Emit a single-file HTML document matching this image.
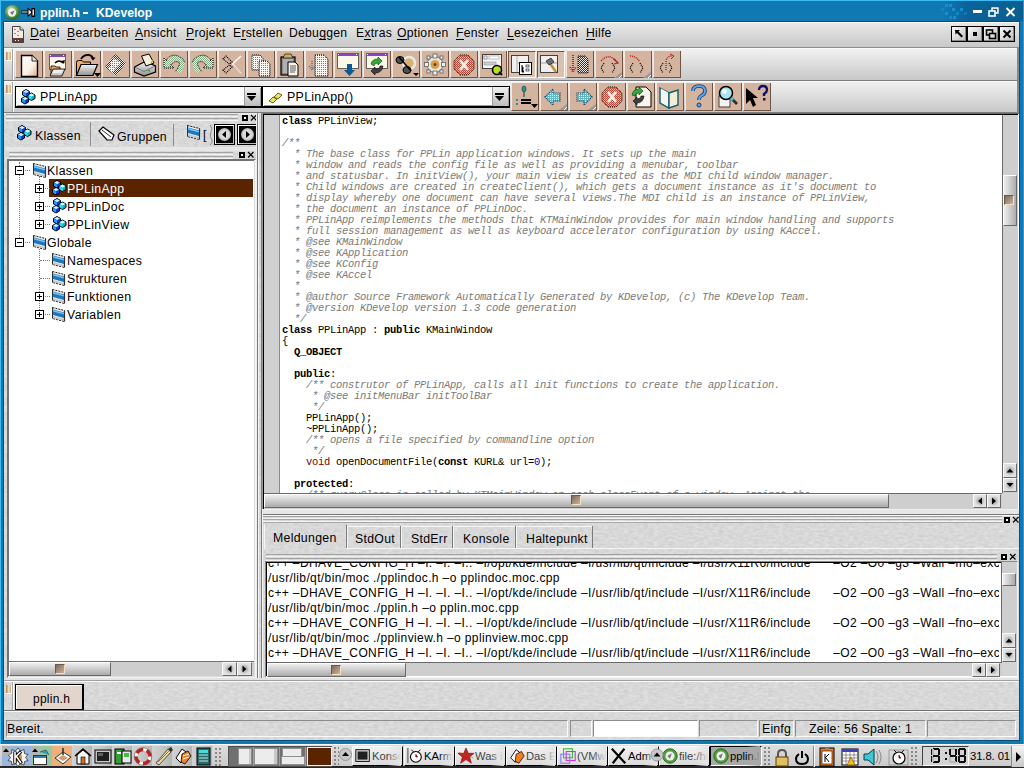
<!DOCTYPE html><html><head><meta charset="utf-8"><title>pplin.h - KDevelop</title><style>
*{margin:0;padding:0;box-sizing:border-box}
html,body{width:1024px;height:768px;overflow:hidden}
body{position:relative;background:#d8d8d8;font-family:"Liberation Sans",sans-serif;font-size:12px;color:#000}
div,span,svg{position:absolute}
u{text-decoration:none;border-bottom:1px solid #000;display:inline-block;line-height:11px}
.btn{width:28px;background:#d4b39f;border-left:1px solid #f6e6dc;border-right:1px solid #6e5444;border-bottom:1px solid #6e5444}
.btn.on{background:#dcc0ae;border:1px solid;border-color:#6e5444 #fff #fff #6e5444}
.hdl{width:5px;height:9px;background:linear-gradient(90deg,#a87c54,#f4dcb4 50%,#d4ac84);border-right:1px solid #fff;border-bottom:1px solid #fff}
.grv{height:3px;border-top:1px solid #a4a4a4;border-bottom:1px solid #f4f4f4}
.vgrv{width:2px;border-left:1px solid #a4a4a4;border-right:1px solid #fff}
.sunk{border:1px solid;border-color:#8c8c8c #fafafa #fafafa #8c8c8c}
.code{font-family:"Liberation Mono",monospace;font-size:10.5px;letter-spacing:-0.3px;line-height:11px;white-space:pre;color:#000}
.cm{color:#7a7a7a;font-style:italic;font-weight:normal}
.kw{font-weight:bold}
.out{font-size:12px;white-space:pre;line-height:15px;letter-spacing:0.38px}
.sbh{background:linear-gradient(#eeeeee,#ababab);border:1px solid;border-color:#fff #6a6a6a #6a6a6a #fff}
.sbv{background:linear-gradient(90deg,#eeeeee,#ababab);border:1px solid;border-color:#fff #6a6a6a #6a6a6a #fff}
.knob{width:10px;height:10px;background:linear-gradient(135deg,#7e6a58,#c8b49c);border:1px solid;border-color:#6c5848 #f2e2c0 #f2e2c0 #6c5848}
.trk{background:#cecece}
.t12{font-size:12.3px;white-space:pre;letter-spacing:0.2px}
</style></head><body>
<div style="left:0px;top:0px;width:1024px;height:744px;background:#1079b1"></div>
<div style="left:0px;top:0px;width:1024px;height:1px;background:#3cbcf4"></div>
<div style="left:0px;top:0px;width:1px;height:744px;background:#3cbcf4"></div>
<div style="left:1023px;top:0px;width:1px;height:744px;background:#2a9ad6"></div>
<div style="left:943px;top:1px;width:80px;height:20px;background:linear-gradient(90deg,#1079b1,#0b6399 30%,#0a5f90)"></div>
<div style="left:945px;top:4px;width:3px;height:3px;background:#1a8ed0"></div>
<div style="left:949px;top:4px;width:3px;height:3px;background:#1a8ed0"></div>
<div style="left:952px;top:8px;width:3px;height:3px;background:#1a8ed0"></div>
<div style="left:945px;top:12px;width:3px;height:3px;background:#1a8ed0"></div>
<div style="left:956px;top:12px;width:3px;height:3px;background:#1486c4"></div>
<div style="left:960px;top:8px;width:3px;height:3px;background:#1a8ed0"></div>
<div style="left:949px;top:16px;width:3px;height:3px;background:#1486c4"></div>
<div style="left:953px;top:16px;width:3px;height:3px;background:#1a8ed0"></div>
<div style="left:964px;top:12px;width:3px;height:3px;background:#1279b4"></div>
<div style="left:941px;top:8px;width:3px;height:3px;background:#1486c4"></div>
<div style="left:3px;top:21px;width:1017px;height:720px;background:#08507a"></div>
<div style="left:4px;top:22px;width:1015px;height:718px;background:#d8d8d8"></div>
<svg style="left:4px;top:22px" width="1015" height="718"><filter id="stn" x="0" y="0" width="100%" height="100%" color-interpolation-filters="sRGB"><feTurbulence type="fractalNoise" baseFrequency="0.2 0.45" numOctaves="2" seed="3"/><feColorMatrix type="matrix" values="0.12 0 0 0 0.787  0.12 0 0 0 0.787  0.12 0 0 0 0.787  0 0 0 0 1"/></filter><rect width="1015" height="718" fill="#000" filter="url(#stn)"/></svg>
<div style="left:1019px;top:22px;width:1px;height:718px;background:#08507a"></div>
<svg style="left:4px;top:4px" width="18" height="17" viewBox="0 0 18 17"><defs><radialGradient id="gi" cx="0.4" cy="0.35" r="0.6"><stop offset="0" stop-color="#e8f4e0"/><stop offset="0.5" stop-color="#78b060"/><stop offset="1" stop-color="#2a7020"/></radialGradient></defs><circle cx="8.5" cy="8.5" r="7.5" fill="url(#gi)"/><circle cx="8" cy="8.5" r="4.2" fill="#f0f0f0"/><path d="M10.5 6.5L6 8.5L8.5 11Z" fill="#707070"/></svg>
<svg style="left:20px;top:7px" width="16" height="11" viewBox="0 0 16 11"><path d="M1 3.5H8V6.5H1Z" fill="#000"/><path d="M1.5 5H8" stroke="#f4f0ec" stroke-width="1"/><path d="M7.5 0.5L12 4V6.5L7.5 10Z" fill="#000"/><path d="M8.5 2.5L11 4.5V6L8.5 8Z" fill="#f4f0ec"/><path d="M11.5 1H15V10H11.5Z" fill="#000"/><path d="M12.5 2.5H14V8.5H12.5Z" fill="#f4f0ec"/></svg>
<div style="left:83px;top:12px;width:5px;height:2px;background:#fff"></div>
<span style="left:40px;top:6px;color:#fff;font-weight:bold;font-size:12.2px;letter-spacing:0px">pplin.h</span>
<span style="left:96px;top:6px;color:#fff;font-weight:bold;font-size:12.2px;letter-spacing:0px">KDevelop</span>
<div style="left:973px;top:10px;width:9px;height:3px;background:#fff"></div>
<svg style="left:988px;top:6px" width="12" height="12" viewBox="0 0 12 12"><rect x="3.5" y="1.5" width="7" height="6" fill="none" stroke="#000" stroke-width="1"/><rect x="4" y="2" width="6" height="5" fill="none" stroke="#fff" stroke-width="1.6"/><rect x="1" y="5" width="6" height="5" fill="#0a5f90" stroke="#fff" stroke-width="1.6"/></svg>
<svg style="left:1005px;top:7px" width="11" height="10" viewBox="0 0 11 10"><path d="M1.5 1L9.5 9M9.5 1L1.5 9" stroke="#fff" stroke-width="1.8"/></svg>
<div style="left:4px;top:22px;width:1015px;height:1px;background:#fff"></div>
<div style="left:4px;top:23px;width:1015px;height:24px;background:linear-gradient(#e8e8e8,#c8c8c8)"></div>
<div style="left:4px;top:47px;width:1015px;height:1px;background:#8e8e8e"></div>
<svg style="left:11px;top:25px" width="14" height="19" viewBox="0 0 14 19"><path d="M1.5 1.5H9L12.5 5V17.5H1.5Z" fill="#f4ece4" stroke="#404040"/><path d="M2 13H12V17H2Z" fill="#6a3a34"/><path d="M9 1.5V5H12.5" fill="#ddd" stroke="#404040"/><g fill="#9a8a80"><rect x="3" y="4" width="2" height="1"/><rect x="6" y="6" width="2" height="1"/><rect x="3" y="8" width="2" height="1"/><rect x="6" y="10" width="2" height="1"/></g><rect x="4" y="15" width="1" height="1" fill="#fff"/><rect x="7" y="15" width="1" height="1" fill="#fff"/></svg>
<span class="t12" style="left:30px;top:26px;font-size:12.2px;letter-spacing:0.25px"><u>D</u>atei</span>
<span class="t12" style="left:67px;top:26px;font-size:12.2px;letter-spacing:0.25px"><u>B</u>earbeiten</span>
<span class="t12" style="left:135px;top:26px;font-size:12.2px;letter-spacing:0.25px"><u>A</u>nsicht</span>
<span class="t12" style="left:186px;top:26px;font-size:12.2px;letter-spacing:0.25px"><u>P</u>rojekt</span>
<span class="t12" style="left:233px;top:26px;font-size:12.2px;letter-spacing:0.25px">E<u>r</u>stellen</span>
<span class="t12" style="left:289px;top:26px;font-size:12.2px;letter-spacing:0.25px">Debu<u>g</u>gen</span>
<span class="t12" style="left:356px;top:26px;font-size:12.2px;letter-spacing:0.25px">E<u>x</u>tras</span>
<span class="t12" style="left:397px;top:26px;font-size:12.2px;letter-spacing:0.25px"><u>O</u>ptionen</span>
<span class="t12" style="left:456px;top:26px;font-size:12.2px;letter-spacing:0.25px"><u>F</u>enster</span>
<span class="t12" style="left:507px;top:26px;font-size:12.2px;letter-spacing:0.25px"><u>L</u>esezeichen</span>
<span class="t12" style="left:586px;top:26px;font-size:12.2px;letter-spacing:0.25px"><u>H</u>ilfe</span>
<div style="left:951px;top:26px;width:16px;height:16px;background:linear-gradient(135deg,#fafafa,#bdbdbd);border:1px solid #000;box-shadow:inset -1px -1px 0 #888"></div>
<svg style="left:952px;top:27px" width="14" height="14" viewBox="0 0 14 14"><path d="M3 3H8L6.5 4.5L11 9L9.5 10.5L5 6L3.5 7.5Z" fill="#000"/></svg>
<div style="left:967px;top:26px;width:16px;height:16px;background:linear-gradient(135deg,#fafafa,#bdbdbd);border:1px solid #000;box-shadow:inset -1px -1px 0 #888"></div>
<svg style="left:968px;top:27px" width="14" height="14" viewBox="0 0 14 14"><rect x="5" y="5" width="4" height="4" fill="#000"/></svg>
<div style="left:983px;top:26px;width:16px;height:16px;background:linear-gradient(135deg,#fafafa,#bdbdbd);border:1px solid #000;box-shadow:inset -1px -1px 0 #888"></div>
<svg style="left:984px;top:27px" width="14" height="14" viewBox="0 0 14 14"><rect x="2.5" y="3" width="6" height="5" fill="none" stroke="#000" stroke-width="1.6"/><rect x="5.5" y="6.5" width="6" height="5" fill="#ddd" stroke="#000" stroke-width="1.6"/></svg>
<div style="left:999px;top:26px;width:16px;height:16px;background:linear-gradient(135deg,#fafafa,#bdbdbd);border:1px solid #000;box-shadow:inset -1px -1px 0 #888"></div>
<svg style="left:1000px;top:27px" width="14" height="14" viewBox="0 0 14 14"><path d="M3.5 3.5L10.5 10.5M10.5 3.5L3.5 10.5" stroke="#000" stroke-width="2"/></svg>
<div style="left:4px;top:48px;width:1015px;height:32px;background:linear-gradient(#f2f2f2,#c8c8c8)"></div>
<div style="left:4px;top:48px;width:1015px;height:1px;background:#fafafa"></div>
<div style="left:4px;top:80px;width:1015px;height:1px;background:#7c7c7c"></div>
<div style="left:4px;top:81px;width:1015px;height:31px;background:linear-gradient(#f2f2f2,#c8c8c8)"></div>
<div style="left:4px;top:81px;width:1015px;height:1px;background:#fafafa"></div>
<div style="left:4px;top:112px;width:1015px;height:1px;background:#7c7c7c"></div>
<div style="left:1017px;top:48px;width:2px;height:65px;background:#888"></div>
<div class="hdl" style="left:6px;top:52px;width:6px;height:9px;"></div>
<div class="hdl" style="left:6px;top:85px;width:6px;height:9px;"></div>
<div class="vgrv" style="left:12px;top:49px;width:2px;height:31px;"></div>
<div class="vgrv" style="left:12px;top:82px;width:2px;height:30px;"></div>
<svg style="left:0;top:0" width="0" height="0"><defs><pattern id="dith" width="2" height="2" patternUnits="userSpaceOnUse"><rect width="2" height="2" fill="#f2ebe4"/><rect width="1" height="1" fill="#3a3028"/><rect x="1" y="1" width="1" height="1" fill="#3a3028"/></pattern><pattern id="dithl" width="2" height="2" patternUnits="userSpaceOnUse"><rect width="2" height="2" fill="#faf6f2"/><rect width="1" height="1" fill="#8a7a70"/></pattern><pattern id="dithg" width="2" height="2" patternUnits="userSpaceOnUse"><rect width="2" height="2" fill="#80b088"/><rect width="1" height="1" fill="#e0f0e0"/><rect x="1" y="1" width="1" height="1" fill="#e0f0e0"/></pattern><pattern id="dithr" width="2" height="2" patternUnits="userSpaceOnUse"><rect width="2" height="2" fill="#b84838"/><rect width="1" height="1" fill="#ecc4bc"/><rect x="1" y="1" width="1" height="1" fill="#d89080"/></pattern><pattern id="dithb" width="2" height="2" patternUnits="userSpaceOnUse"><rect width="2" height="2" fill="#60b8c8"/><rect width="1" height="1" fill="#e8f8fc"/></pattern><linearGradient id="gry" x1="0" y1="0" x2="0" y2="1"><stop offset="0" stop-color="#f4f4f4"/><stop offset="1" stop-color="#909090"/></linearGradient></defs></svg>
<div class="btn" style="left:15px;top:51px;width:28px;height:27px;"></div>
<svg style="left:15px;top:51px" width="28" height="27" viewBox="0 0 28 27"><defs><linearGradient id="pg" x1="0" y1="0" x2="1" y2="1"><stop offset="0" stop-color="#fff"/><stop offset="0.6" stop-color="#fbeee4"/><stop offset="1" stop-color="#e0a884"/></linearGradient></defs><path d="M6.5 4.5H17L22.5 10V25.5H6.5Z" fill="url(#pg)" stroke="#000" stroke-width="1.4"/><path d="M17 4.5V10H22.5" fill="#e8e8e8" stroke="#000" stroke-width="0.8"/></svg>
<div class="btn" style="left:44px;top:51px;width:28px;height:27px;"></div>
<svg style="left:44px;top:51px" width="28" height="27" viewBox="0 0 28 27"><rect x="5.5" y="3.5" width="16" height="15" fill="#fbf8e8" stroke="#606060"/><rect x="6" y="4" width="15" height="2" fill="#8a44c4"/><rect x="6" y="4" width="1" height="1" fill="#fff"/><rect x="19" y="4" width="1" height="1" fill="#fff"/><g transform="translate(6,13)"><path d="M1 2H5L6 3H10V11H1Z" fill="#f0a860" stroke="#000" stroke-width="0.8"/><path d="M3 5H15L12 12H0Z" fill="#c8c8c8" stroke="#000" stroke-width="0.8"/><path d="M4 6H13L11.5 9H2Z" fill="#eeeeee"/></g><path d="M11 12Q15 8 19 12" fill="none" stroke="#000" stroke-width="1.6"/><path d="M17 10L20 13L21 9Z" fill="#000"/></svg>
<div class="btn" style="left:73px;top:51px;width:28px;height:27px;"></div>
<svg style="left:73px;top:51px" width="28" height="27" viewBox="0 0 28 27"><path d="M3.5 11.5Q3.5 9.5 5.5 9.5H9L10.5 11H17.5V24.5H3.5Z" fill="#f2a860" stroke="#000" stroke-width="1"/><path d="M3.5 24.5L8 13.5H24.5L20 24.5Z" fill="url(#gry)" stroke="#000" stroke-width="1.2"/><path d="M8 8Q11 3.5 16 4Q19 4.5 20 7" fill="none" stroke="#000" stroke-width="1.8"/><path d="M17.5 6.5H22.5L20 9.5Z" fill="#000"/><path d="M21 22H28L24.5 26Z" fill="#000"/></svg>
<div class="btn" style="left:102px;top:51px;width:28px;height:27px;"></div>
<svg style="left:102px;top:51px" width="28" height="27" viewBox="0 0 28 27"><path d="M13 3L24 12L14 25L3 16Z" fill="url(#dith)"/><path d="M12 7L19 12L14 17L8 13Z" fill="url(#dithl)"/><path d="M6 17L10 14L14 18L10 21Z" fill="url(#dithl)"/></svg>
<div class="btn" style="left:131px;top:51px;width:28px;height:27px;"></div>
<svg style="left:131px;top:51px" width="28" height="27" viewBox="0 0 28 27"><path d="M3.5 16L14 10.5L24.5 15V21L13 25L3.5 21Z" fill="url(#gry)" stroke="#000" stroke-width="1.2"/><path d="M3.5 16L13 20.5L24.5 15" fill="none" stroke="#666" stroke-width="0.8"/><path d="M10.5 5L18 3L23 12L15 15Z" fill="#f6eee0" stroke="#000" stroke-width="1"/><path d="M20 12L22 9" stroke="#c0b000" stroke-width="1.2"/><rect x="17" y="19" width="2" height="1.5" fill="#20c020"/></svg>
<div class="btn" style="left:160px;top:51px;width:28px;height:27px;"></div>
<svg style="left:160px;top:51px" width="28" height="27" viewBox="0 0 28 27"><path d="M4 7L4 17L14 17Z" fill="url(#dithg)" stroke="#000" stroke-dasharray="1 1"/><path d="M8 13Q13 3 21 9Q25 12 18 21" fill="none" stroke="url(#dithg)" stroke-width="4.5"/><path d="M10 16Q14 8.5 19 11.5Q21 13 15 21" fill="none" stroke="#000" stroke-dasharray="1 1"/><path d="M6 9Q13 0 23 8L25 12" fill="none" stroke="#000" stroke-dasharray="1 1"/></svg>
<div class="btn" style="left:189px;top:51px;width:28px;height:27px;"></div>
<svg style="left:189px;top:51px" width="28" height="27" viewBox="0 0 28 27"><g transform="translate(28,0) scale(-1,1)"><path d="M4 7L4 17L14 17Z" fill="url(#dithg)" stroke="#000" stroke-dasharray="1 1"/><path d="M8 13Q13 3 21 9Q25 12 18 21" fill="none" stroke="url(#dithg)" stroke-width="4.5"/><path d="M10 16Q14 8.5 19 11.5Q21 13 15 21" fill="none" stroke="#000" stroke-dasharray="1 1"/><path d="M6 9Q13 0 23 8L25 12" fill="none" stroke="#000" stroke-dasharray="1 1"/></g></svg>
<div class="btn" style="left:218px;top:51px;width:28px;height:27px;"></div>
<svg style="left:218px;top:51px" width="28" height="27" viewBox="0 0 28 27"><path d="M14.5 13L23 5M14.5 13L23 22" stroke="#fff" stroke-width="1.4"/><path d="M15 14L23 21.5" stroke="#999" stroke-width="0.6"/><path d="M5 8L8 5L14 11L11.5 13Z" fill="none" stroke="#000" stroke-dasharray="1 1" stroke-width="1.2"/><path d="M5 19L8 22L14 16L11.5 14Z" fill="none" stroke="#000" stroke-dasharray="1 1" stroke-width="1.2"/></svg>
<div class="btn" style="left:247px;top:51px;width:28px;height:27px;"></div>
<svg style="left:247px;top:51px" width="28" height="27" viewBox="0 0 28 27"><path d="M5 4H13L16 7V19H5Z" fill="url(#dithl)" stroke="#000" stroke-width="1" stroke-dasharray="1 1"/><path d="M12 10H20L23 13V25H12Z" fill="url(#dithl)" stroke="#000" stroke-width="1" stroke-dasharray="1 1"/></svg>
<div class="btn" style="left:276px;top:51px;width:28px;height:27px;"></div>
<svg style="left:276px;top:51px" width="28" height="27" viewBox="0 0 28 27"><rect x="5" y="6" width="14" height="18" fill="#8a8a8a" stroke="#000" stroke-width="1.2"/><rect x="7" y="8" width="10" height="14" fill="#b0b0b0"/><path d="M9 3H15L17 7H7Z" fill="#c8b060" stroke="#000" stroke-width="0.6"/><path d="M12 11H19L22 14V25H12Z" fill="#fbf4ec" stroke="#000"/><g stroke="#333" stroke-width="0.8"><path d="M14 15H20M14 17H20M14 19H20M14 21H19"/></g></svg>
<div class="btn" style="left:305px;top:51px;width:28px;height:27px;"></div>
<svg style="left:305px;top:51px" width="28" height="27" viewBox="0 0 28 27"><path d="M10 4H19L23 8V25H10Z" fill="url(#dithl)" stroke="#000" stroke-width="1" stroke-dasharray="1 1"/><path d="M7 10V18M4 15L7 19L10 15" fill="none" stroke="#3a78b0" stroke-width="1.5" stroke-dasharray="1 1"/></svg>
<div class="btn" style="left:334px;top:51px;width:28px;height:27px;"></div>
<svg style="left:334px;top:51px" width="28" height="27" viewBox="0 0 28 27"><rect x="3.5" y="2.5" width="21" height="15" fill="#fbf8e8" stroke="#606060"/><rect x="4" y="3" width="20" height="2" fill="#8a44c4"/><rect x="4" y="3" width="1" height="1" fill="#fff"/><rect x="22" y="3" width="1" height="1" fill="#fff"/><path d="M13 13H18V19H21L15.5 25L10 19H13Z" fill="#0a5a96"/></svg>
<div class="btn" style="left:363px;top:51px;width:28px;height:27px;"></div>
<svg style="left:363px;top:51px" width="28" height="27" viewBox="0 0 28 27"><rect x="3.5" y="2.5" width="21" height="15" fill="#fbf8e8" stroke="#606060"/><rect x="4" y="3" width="20" height="2" fill="#8a44c4"/><rect x="4" y="3" width="1" height="1" fill="#fff"/><rect x="22" y="3" width="1" height="1" fill="#fff"/><path d="M8 13Q9 8 15 8L15 6L19 10L15 14L15 12Q11 12 11 15Z" fill="#38a838" stroke="#084008" stroke-width="0.6"/><path d="M20 15Q19 22 12 22L12 24L8 20L12 16L12 18Q17 18 17 15Z" fill="#404040" stroke="#000" stroke-width="0.6"/></svg>
<div class="btn" style="left:392px;top:51px;width:28px;height:27px;"></div>
<svg style="left:392px;top:51px" width="28" height="27" viewBox="0 0 28 27"><circle cx="17" cy="12" r="6" fill="#d8b070" stroke="#e8e8e8" stroke-width="2.5"/><ellipse cx="8" cy="9" rx="4" ry="3.5" fill="#505050" stroke="#000"/><ellipse cx="15" cy="19" rx="4" ry="3.5" fill="#505050" stroke="#000"/><path d="M7 6L19 20" stroke="#000" stroke-width="1.5"/><path d="M21 22H27L24 25Z" fill="#000"/></svg>
<div class="btn" style="left:421px;top:51px;width:28px;height:27px;"></div>
<svg style="left:421px;top:51px" width="28" height="27" viewBox="0 0 28 27"><circle cx="14" cy="13.5" r="8" fill="#e8e8e8" stroke="#707070" stroke-width="1"/><g fill="#f0f0f0" stroke="#606060" stroke-width="0.8"><rect x="12" y="3" width="4" height="4"/><rect x="12" y="20" width="4" height="4"/><rect x="3.5" y="11.5" width="4" height="4"/><rect x="20.5" y="11.5" width="4" height="4"/><rect x="6" y="5" width="3" height="3"/><rect x="19" y="5" width="3" height="3"/><rect x="6" y="19" width="3" height="3"/><rect x="19" y="19" width="3" height="3"/></g><circle cx="14" cy="13.5" r="4.5" fill="#d8a048"/><circle cx="14" cy="13.5" r="1.5" fill="#604020"/></svg>
<div class="btn" style="left:450px;top:51px;width:28px;height:27px;"></div>
<svg style="left:450px;top:51px" width="28" height="27" viewBox="0 0 28 27"><path d="M10 4H18L24 10V18L18 24H10L4 18V10Z" fill="url(#dithr)" stroke="#000" stroke-dasharray="1 1"/><path d="M10 9L18 19M18 9L10 19" stroke="#f8ece8" stroke-width="2.6"/></svg>
<div class="btn" style="left:479px;top:51px;width:28px;height:27px;"></div>
<svg style="left:479px;top:51px" width="28" height="27" viewBox="0 0 28 27"><rect x="3.5" y="3.5" width="19" height="14" fill="#f4f4f4" stroke="#404040"/><rect x="5" y="5" width="3" height="3" fill="#fff" stroke="#555" stroke-width="0.6"/><rect x="10" y="5" width="10" height="3" fill="#fff" stroke="#999" stroke-width="0.6"/><rect x="5" y="11" width="12" height="3" fill="#ccc" stroke="#999" stroke-width="0.6"/><circle cx="18" cy="19" r="4.5" fill="#b8e020" stroke="#000" stroke-width="1.6"/><path d="M20 21L23 24" stroke="#000" stroke-width="2"/></svg>
<div class="btn on" style="left:508px;top:51px;width:28px;height:27px;"></div>
<svg style="left:508px;top:51px" width="28" height="27" viewBox="0 0 28 27"><rect x="3.5" y="4.5" width="17" height="17" fill="#f0f0f0" stroke="#404040"/><path d="M9 5V21M9 12H20" stroke="#b0b0b0"/><rect x="11.5" y="11.5" width="12" height="12" fill="#fff" stroke="#000"/><path d="M14 14V21H16M14 17H16" stroke="#000"/><rect x="18" y="14" width="3" height="2" fill="none" stroke="#000" stroke-width="0.6"/><rect x="18" y="18" width="3" height="2" fill="none" stroke="#000" stroke-width="0.6"/></svg>
<div class="btn on" style="left:537px;top:51px;width:28px;height:27px;"></div>
<svg style="left:537px;top:51px" width="28" height="27" viewBox="0 0 28 27"><rect x="3.5" y="4.5" width="17" height="17" fill="#f0f0f0" stroke="#404040"/><path d="M4 12H20" stroke="#a0a0a0"/><path d="M12 11L19 21" stroke="#c09040" stroke-width="2.5"/><path d="M9 10L14 7L17 11L12 14Z" fill="#707070" stroke="#000" stroke-width="0.6"/></svg>
<div class="btn" style="left:566px;top:51px;width:28px;height:27px;"></div>
<svg style="left:566px;top:51px" width="28" height="27" viewBox="0 0 28 27"><path d="M7 4V20M4 16L7 21L10 16" fill="none" stroke="#b02020" stroke-width="1.8" stroke-dasharray="1 1"/><path d="M12 5H19L22 8V22H12Z" fill="url(#dith)" stroke="#000" stroke-width="1" stroke-dasharray="1 1"/></svg>
<div class="btn" style="left:595px;top:51px;width:28px;height:27px;"></div>
<svg style="left:595px;top:51px" width="28" height="27" viewBox="0 0 28 27"><path d="M6 10Q13 2 20 9L22 11" fill="none" stroke="#b02020" stroke-width="1.6" stroke-dasharray="1 1"/><path d="M19 8L23 12L19 13" fill="none" stroke="#b02020" stroke-width="1.2"/><path d="M9 12L6 17L9 22M17 12L20 17L17 22" fill="none" stroke="#000" stroke-width="1.2" stroke-dasharray="1 1"/><path d="M19 27L27 21V27Z" fill="#999"/><path d="M24 27L27 24" stroke="#fff"/></svg>
<div class="btn" style="left:624px;top:51px;width:28px;height:27px;"></div>
<svg style="left:624px;top:51px" width="28" height="27" viewBox="0 0 28 27"><path d="M6 5Q12 5 16 11" fill="none" stroke="#b02020" stroke-width="1.6" stroke-dasharray="1 1"/><path d="M9 12L6 17L9 22M16 12L19 17L16 22" fill="none" stroke="#000" stroke-width="1.2" stroke-dasharray="1 1"/><path d="M19 27L27 21V27Z" fill="#999"/><path d="M24 27L27 24" stroke="#fff"/></svg>
<div class="btn" style="left:653px;top:51px;width:28px;height:27px;"></div>
<svg style="left:653px;top:51px" width="28" height="27" viewBox="0 0 28 27"><path d="M13 19V10Q14 5 19 5" fill="none" stroke="#b02020" stroke-width="1.4" stroke-dasharray="1 1"/><path d="M17 3L21 5L18 8" fill="none" stroke="#b02020"/><path d="M10 12L7 17L10 22M16 12L19 17L16 22" fill="none" stroke="#000" stroke-width="1.2" stroke-dasharray="1 1"/></svg>
<div style="left:15px;top:86px;width:247px;height:22px;background:#fff;border:1px solid #000;border-bottom:2px solid #000;box-shadow:inset 1px 1px 0 #fff, inset -1px -1px 0 #9a9a9a"></div>
<div style="left:244px;top:87px;width:16px;height:19px;background:linear-gradient(#f0f0f0,#bcbcbc);border-left:1px solid #9a9a9a"></div>
<svg style="left:247px;top:93px" width="10" height="9" viewBox="0 0 10 9"><rect x="0" y="0" width="9" height="2" fill="#000"/><path d="M0 3H9L4.5 8Z" fill="#000"/></svg>
<svg style="left:20px;top:88px" width="17" height="18" viewBox="0 0 17 18"><path d="M6.0 1.5L9.5 3.5V7.0L6.0 9.0L2.5 7.0V3.5Z" fill="#0a3ae0" stroke="#000" stroke-width="1"/><path d="M6.0 2.1L8.9 3.6L6.0 5.3L3.1 3.6Z" fill="#c8f0ff"/><path d="M3.0 4.0L6.0 5.5V8.5L3.0 6.8Z" fill="#1aa0f8"/><path d="M11.5 5L15 7V10.5L11.5 12.5L8 10.5V7Z" fill="#10b0c0" stroke="#000" stroke-width="1"/><path d="M11.5 5.6L14.4 7.1L11.5 8.8L8.6 7.1Z" fill="#d0ffff"/><path d="M8.5 7.5L11.5 9V12L8.5 10.3Z" fill="#20e8f0"/><path d="M5.0 8.5L8.5 10.5V14.0L5.0 16.0L1.5 14.0V10.5Z" fill="#0a3ae0" stroke="#000" stroke-width="1"/><path d="M5.0 9.1L7.9 10.6L5.0 12.3L2.1 10.6Z" fill="#c8f0ff"/><path d="M2.0 11.0L5.0 12.5V15.5L2.0 13.8Z" fill="#1aa0f8"/></svg>
<span class="t12" style="left:40px;top:90px;font-size:12.4px;letter-spacing:0.3px">PPLinApp</span>
<div style="left:262px;top:86px;width:248px;height:22px;background:#fff;border:1px solid #000;border-bottom:2px solid #000;box-shadow:inset 1px 1px 0 #fff, inset -1px -1px 0 #9a9a9a"></div>
<div style="left:492px;top:87px;width:16px;height:19px;background:linear-gradient(#f0f0f0,#bcbcbc);border-left:1px solid #9a9a9a"></div>
<svg style="left:495px;top:93px" width="10" height="9" viewBox="0 0 10 9"><rect x="0" y="0" width="9" height="2" fill="#000"/><path d="M0 3H9L4.5 8Z" fill="#000"/></svg>
<svg style="left:267px;top:88px" width="17" height="18" viewBox="0 0 17 18"><g transform="translate(1,2)"><path d="M1 11L5 7L9 9L5 13Z" fill="#f0e060" stroke="#404000" stroke-width="0.8"/><path d="M6 7L10 3L14 5L10 9Z" fill="#f0e060" stroke="#404000" stroke-width="0.8"/></g></svg>
<span class="t12" style="left:287px;top:90px;font-size:12.4px;letter-spacing:0.3px">PPLinApp()</span>
<div class="btn" style="left:511px;top:83px;width:28px;height:28px;"></div>
<svg style="left:511px;top:83px" width="28" height="28" viewBox="0 0 28 28"><ellipse cx="13" cy="6" rx="2" ry="3" fill="#309090" stroke="#004040" stroke-width="0.6"/><path d="M13 9V12" stroke="#004040"/><rect x="12" y="12" width="2" height="2" fill="#309090"/><path d="M10 17H20M10 20H20" stroke="#000" stroke-width="2"/><rect x="5" y="16" width="2" height="2" fill="#309090"/><rect x="5" y="20" width="2" height="2" fill="#309090"/><path d="M20 21H27L23.5 25Z" fill="#000"/></svg>
<div class="btn" style="left:540px;top:83px;width:28px;height:28px;"></div>
<svg style="left:540px;top:83px" width="28" height="28" viewBox="0 0 28 28"><path d="M5 14L13 6V10H20V18H13V22Z" fill="url(#dithb)" stroke="#003050" stroke-width="1.2" stroke-dasharray="1 1"/><path d="M19 27L27 21V27Z" fill="#999"/><path d="M24 27L27 24" stroke="#fff"/></svg>
<div class="btn" style="left:569px;top:83px;width:28px;height:28px;"></div>
<svg style="left:569px;top:83px" width="28" height="28" viewBox="0 0 28 28"><path d="M23 14L15 6V10H8V18H15V22Z" fill="url(#dithb)" stroke="#003050" stroke-width="1.2" stroke-dasharray="1 1"/><path d="M19 27L27 21V27Z" fill="#999"/><path d="M24 27L27 24" stroke="#fff"/></svg>
<div class="btn" style="left:598px;top:83px;width:28px;height:28px;"></div>
<svg style="left:598px;top:83px" width="28" height="28" viewBox="0 0 28 28"><path d="M10 4H18L24 10V18L18 24H10L4 18V10Z" fill="url(#dithr)" stroke="#000" stroke-dasharray="1 1"/><path d="M10 9L18 19M18 9L10 19" stroke="#f8ece8" stroke-width="2.6"/></svg>
<div class="btn" style="left:627px;top:83px;width:28px;height:28px;"></div>
<svg style="left:627px;top:83px" width="28" height="28" viewBox="0 0 28 28"><path d="M9 4H19L24 9V24H9Z" fill="#fbf4ec" stroke="#000"/><path d="M5 12Q6 6 12 6L12 4L16 8L12 12L12 10Q8 10 8 13Z" fill="#38a838" stroke="#084008" stroke-width="0.6"/><path d="M17 13Q16 20 10 20L10 22L6 18L10 14L10 16Q14 16 14 13Z" fill="#404040" stroke="#000" stroke-width="0.6"/></svg>
<div class="btn" style="left:656px;top:83px;width:28px;height:28px;"></div>
<svg style="left:656px;top:83px" width="28" height="28" viewBox="0 0 28 28"><path d="M4 5L13 10V25L4 20Z" fill="#f8f4ec" stroke="#106070" stroke-width="1.4"/><path d="M13 10L22 7V22L13 25Z" fill="#f4ecd4" stroke="#106070" stroke-width="1.4"/><path d="M5 6L12 10" stroke="#fff"/></svg>
<div class="btn" style="left:685px;top:83px;width:28px;height:28px;"></div>
<svg style="left:685px;top:83px" width="28" height="28" viewBox="0 0 28 28"><path d="M8 8Q8 3 14 3Q20 3 20 8Q20 11 16 13Q14 14 14 17" fill="none" stroke="#1a3a70" stroke-width="3.6"/><path d="M8 8Q8 3 14 3Q20 3 20 8Q20 11 16 13Q14 14 14 17" fill="none" stroke="#5aa8e8" stroke-width="2"/><circle cx="14" cy="22" r="2" fill="#5aa8e8" stroke="#1a3a70"/></svg>
<div class="btn" style="left:714px;top:83px;width:28px;height:28px;"></div>
<svg style="left:714px;top:83px" width="28" height="28" viewBox="0 0 28 28"><rect x="5" y="13" width="11" height="11" fill="#f4f4f4" stroke="#404040"/><circle cx="12" cy="10" r="6.5" fill="#a8e4f0" stroke="#000" stroke-width="1.5"/><circle cx="10.5" cy="8.5" r="2.5" fill="#e8f8fc"/><path d="M17 15L23 21" stroke="#303030" stroke-width="2.8"/><path d="M17 15L19 17" stroke="#30d0e0" stroke-width="2.8"/></svg>
<div class="btn" style="left:743px;top:83px;width:28px;height:28px;"></div>
<svg style="left:743px;top:83px" width="28" height="28" viewBox="0 0 28 28"><path d="M3 5L3 21L7 17L10 24L13 22L10 15L15 15Z" fill="#000"/><path d="M16 7Q16 3 20 3Q24 3 24 7Q24 9 21 11L21 13" fill="none" stroke="#10106a" stroke-width="2.4"/><rect x="20" y="15" width="2.5" height="2.5" fill="#10106a"/></svg>
<div style="left:4px;top:113px;width:254px;height:2px;background:#e8e8e8"></div>
<div class="grv" style="left:6px;top:114px;width:232px;height:3px;"></div>
<div class="grv" style="left:6px;top:118px;width:232px;height:3px;"></div>
<div style="left:242px;top:115px;width:6px;height:6px;border:2px solid #000;background:#fff"></div>
<svg style="left:250px;top:114px" width="8" height="8" viewBox="0 0 8 8"><path d="M1 1L6.5 6.5M6.5 1L1 6.5" stroke="#000" stroke-width="1.2"/></svg>
<div style="left:90px;top:122px;width:1px;height:24px;background:#8c8c8c"></div>
<svg style="left:16px;top:124px" width="16" height="17" viewBox="0 0 16 17"><path d="M6.0 1.5L9.5 3.5V7.0L6.0 9.0L2.5 7.0V3.5Z" fill="#0a3ae0" stroke="#000" stroke-width="1"/><path d="M6.0 2.1L8.9 3.6L6.0 5.3L3.1 3.6Z" fill="#c8f0ff"/><path d="M3.0 4.0L6.0 5.5V8.5L3.0 6.8Z" fill="#1aa0f8"/><path d="M11.5 5L15 7V10.5L11.5 12.5L8 10.5V7Z" fill="#10b0c0" stroke="#000" stroke-width="1"/><path d="M11.5 5.6L14.4 7.1L11.5 8.8L8.6 7.1Z" fill="#d0ffff"/><path d="M8.5 7.5L11.5 9V12L8.5 10.3Z" fill="#20e8f0"/><path d="M5.0 8.5L8.5 10.5V14.0L5.0 16.0L1.5 14.0V10.5Z" fill="#0a3ae0" stroke="#000" stroke-width="1"/><path d="M5.0 9.1L7.9 10.6L5.0 12.3L2.1 10.6Z" fill="#c8f0ff"/><path d="M2.0 11.0L5.0 12.5V15.5L2.0 13.8Z" fill="#1aa0f8"/></svg>
<span class="t12" style="left:35px;top:129px;font-size:12.3px;letter-spacing:0.3px">Klassen</span>
<svg style="left:97px;top:125px" width="19" height="16" viewBox="0 0 19 16"><path d="M2 6L6 2L17 10L15 15H10Z" fill="#fff" stroke="#000" stroke-width="1.2"/><path d="M5 5L14 12" stroke="#000" stroke-width="0.8"/></svg>
<span class="t12" style="left:117px;top:130px;font-size:12.3px;letter-spacing:0.3px">Gruppen</span>
<div style="left:173px;top:124px;width:1px;height:22px;background:#8c8c8c"></div>
<svg style="left:186px;top:124px" width="16" height="17" viewBox="0 0 16 17"><path d="M1.5 1.5L13.5 4.5V15.5L1.5 12.5Z" fill="#e8e8e8" stroke="#202020" stroke-width="1" stroke-dasharray="2 1"/><path d="M2 3.5L13 6.5V12L2 9Z" fill="#1a78c0"/><path d="M2 4L13 7V8.5L2 5.5Z" fill="#7cc4f0"/><path d="M2 10L13 13V15L2 12Z" fill="#c8c8c8"/><path d="M13.5 4.5V15.5" stroke="#303030" stroke-width="1.2"/><path d="M1.5 1.5V12.5" stroke="#303030" stroke-width="1"/></svg>
<span class="t12" style="left:203px;top:128px;font-size:12px">[</span>
<svg style="left:208px;top:124px" width="6" height="22" viewBox="0 0 6 22"><path d="M2 1Q5 4 3 8Q1 12 4 16Q5 19 2 21" fill="none" stroke="#8a8a8a"/></svg>
<div style="left:214px;top:124px;width:21px;height:21px;background:#000;border:1px solid #000;box-shadow:inset 1px 1px 0 #fff, inset -1px -1px 0 #bbb"></div>
<div style="left:218px;top:128px;width:13px;height:13px;background:radial-gradient(circle,#dcdcdc 45%,#a4a4a4 75%);border-radius:7px"></div>
<svg style="left:221px;top:127px" width="8" height="15" viewBox="0 0 8 15"><path d="M5 4L1 7.5L5 11Z" fill="#000"/></svg>
<div style="left:237px;top:124px;width:21px;height:21px;background:#000;border:1px solid #000;box-shadow:inset 1px 1px 0 #fff, inset -1px -1px 0 #bbb"></div>
<div style="left:241px;top:128px;width:13px;height:13px;background:radial-gradient(circle,#dcdcdc 45%,#a4a4a4 75%);border-radius:7px"></div>
<svg style="left:244px;top:127px" width="8" height="15" viewBox="0 0 8 15"><path d="M2 4L6 7.5L2 11Z" fill="#000"/></svg>
<div style="left:6px;top:147px;width:250px;height:4px;background:#e6e6e6"></div>
<div class="grv" style="left:9px;top:152px;width:224px;height:3px;"></div>
<div class="grv" style="left:9px;top:156px;width:224px;height:3px;"></div>
<div style="left:239px;top:152px;width:6px;height:6px;border:2px solid #000;background:#fff"></div>
<svg style="left:247px;top:151px" width="8" height="8" viewBox="0 0 8 8"><path d="M1 1L6.5 6.5M6.5 1L1 6.5" stroke="#000" stroke-width="1.2"/></svg>
<div style="left:7px;top:159px;width:249px;height:519px;background:#fff;border:2px solid;border-color:#727272 #f4f4f4 #f4f4f4 #727272"></div>
<div style="left:254px;top:160px;width:1px;height:516px;background:#dcdcdc"></div>
<div style="left:8px;top:676px;width:247px;height:1px;background:#dcdcdc"></div>
<div style="left:49px;top:179px;width:204px;height:18px;background:#5b2400"></div>
<div style="left:19px;top:162px;width:1px;height:76px;border-left:1px dotted #7a7a7a"></div>
<div style="left:39px;top:176px;width:1px;height:44px;border-left:1px dotted #7a7a7a"></div>
<div style="left:39px;top:247px;width:1px;height:67px;border-left:1px dotted #7a7a7a"></div>
<div style="left:15px;top:166px;width:9px;height:9px;background:#fff;border:1px solid #000"></div>
<div style="left:17px;top:170px;width:5px;height:1px;background:#000"></div>
<div style="left:25px;top:170px;width:5px;height:1px;border-top:1px dotted #7a7a7a"></div>
<svg style="left:32px;top:162px" width="16" height="17" viewBox="0 0 16 17"><path d="M1.5 1.5L13.5 4.5V15.5L1.5 12.5Z" fill="#e8e8e8" stroke="#202020" stroke-width="1" stroke-dasharray="2 1"/><path d="M2 3.5L13 6.5V12L2 9Z" fill="#1a78c0"/><path d="M2 4L13 7V8.5L2 5.5Z" fill="#7cc4f0"/><path d="M2 10L13 13V15L2 12Z" fill="#c8c8c8"/><path d="M13.5 4.5V15.5" stroke="#303030" stroke-width="1.2"/><path d="M1.5 1.5V12.5" stroke="#303030" stroke-width="1"/></svg>
<span class="t12" style="left:47px;top:164px;font-size:12.3px;letter-spacing:0.35px;color:#000">Klassen</span>
<div style="left:35px;top:184px;width:9px;height:9px;background:#fff;border:1px solid #000"></div>
<div style="left:37px;top:188px;width:5px;height:1px;background:#000"></div>
<div style="left:39px;top:186px;width:1px;height:5px;background:#000"></div>
<div style="left:45px;top:188px;width:5px;height:1px;border-top:1px dotted #7a7a7a"></div>
<svg style="left:51px;top:179px" width="17" height="17" viewBox="0 0 17 17"><path d="M6.0 1.5L9.5 3.5V7.0L6.0 9.0L2.5 7.0V3.5Z" fill="#0a3ae0" stroke="#000" stroke-width="1"/><path d="M6.0 2.1L8.9 3.6L6.0 5.3L3.1 3.6Z" fill="#c8f0ff"/><path d="M3.0 4.0L6.0 5.5V8.5L3.0 6.8Z" fill="#1aa0f8"/><path d="M11.5 5L15 7V10.5L11.5 12.5L8 10.5V7Z" fill="#10b0c0" stroke="#000" stroke-width="1"/><path d="M11.5 5.6L14.4 7.1L11.5 8.8L8.6 7.1Z" fill="#d0ffff"/><path d="M8.5 7.5L11.5 9V12L8.5 10.3Z" fill="#20e8f0"/><path d="M5.0 8.5L8.5 10.5V14.0L5.0 16.0L1.5 14.0V10.5Z" fill="#0a3ae0" stroke="#000" stroke-width="1"/><path d="M5.0 9.1L7.9 10.6L5.0 12.3L2.1 10.6Z" fill="#c8f0ff"/><path d="M2.0 11.0L5.0 12.5V15.5L2.0 13.8Z" fill="#1aa0f8"/></svg>
<span class="t12" style="left:67px;top:182px;font-size:12.3px;letter-spacing:0.35px;color:#fff">PPLinApp</span>
<div style="left:35px;top:202px;width:9px;height:9px;background:#fff;border:1px solid #000"></div>
<div style="left:37px;top:206px;width:5px;height:1px;background:#000"></div>
<div style="left:39px;top:204px;width:1px;height:5px;background:#000"></div>
<div style="left:45px;top:206px;width:5px;height:1px;border-top:1px dotted #7a7a7a"></div>
<svg style="left:51px;top:197px" width="17" height="17" viewBox="0 0 17 17"><path d="M6.0 1.5L9.5 3.5V7.0L6.0 9.0L2.5 7.0V3.5Z" fill="#0a3ae0" stroke="#000" stroke-width="1"/><path d="M6.0 2.1L8.9 3.6L6.0 5.3L3.1 3.6Z" fill="#c8f0ff"/><path d="M3.0 4.0L6.0 5.5V8.5L3.0 6.8Z" fill="#1aa0f8"/><path d="M11.5 5L15 7V10.5L11.5 12.5L8 10.5V7Z" fill="#10b0c0" stroke="#000" stroke-width="1"/><path d="M11.5 5.6L14.4 7.1L11.5 8.8L8.6 7.1Z" fill="#d0ffff"/><path d="M8.5 7.5L11.5 9V12L8.5 10.3Z" fill="#20e8f0"/><path d="M5.0 8.5L8.5 10.5V14.0L5.0 16.0L1.5 14.0V10.5Z" fill="#0a3ae0" stroke="#000" stroke-width="1"/><path d="M5.0 9.1L7.9 10.6L5.0 12.3L2.1 10.6Z" fill="#c8f0ff"/><path d="M2.0 11.0L5.0 12.5V15.5L2.0 13.8Z" fill="#1aa0f8"/></svg>
<span class="t12" style="left:67px;top:200px;font-size:12.3px;letter-spacing:0.35px;color:#000">PPLinDoc</span>
<div style="left:35px;top:220px;width:9px;height:9px;background:#fff;border:1px solid #000"></div>
<div style="left:37px;top:224px;width:5px;height:1px;background:#000"></div>
<div style="left:39px;top:222px;width:1px;height:5px;background:#000"></div>
<div style="left:45px;top:224px;width:5px;height:1px;border-top:1px dotted #7a7a7a"></div>
<svg style="left:51px;top:215px" width="17" height="17" viewBox="0 0 17 17"><path d="M6.0 1.5L9.5 3.5V7.0L6.0 9.0L2.5 7.0V3.5Z" fill="#0a3ae0" stroke="#000" stroke-width="1"/><path d="M6.0 2.1L8.9 3.6L6.0 5.3L3.1 3.6Z" fill="#c8f0ff"/><path d="M3.0 4.0L6.0 5.5V8.5L3.0 6.8Z" fill="#1aa0f8"/><path d="M11.5 5L15 7V10.5L11.5 12.5L8 10.5V7Z" fill="#10b0c0" stroke="#000" stroke-width="1"/><path d="M11.5 5.6L14.4 7.1L11.5 8.8L8.6 7.1Z" fill="#d0ffff"/><path d="M8.5 7.5L11.5 9V12L8.5 10.3Z" fill="#20e8f0"/><path d="M5.0 8.5L8.5 10.5V14.0L5.0 16.0L1.5 14.0V10.5Z" fill="#0a3ae0" stroke="#000" stroke-width="1"/><path d="M5.0 9.1L7.9 10.6L5.0 12.3L2.1 10.6Z" fill="#c8f0ff"/><path d="M2.0 11.0L5.0 12.5V15.5L2.0 13.8Z" fill="#1aa0f8"/></svg>
<span class="t12" style="left:67px;top:218px;font-size:12.3px;letter-spacing:0.35px;color:#000">PPLinView</span>
<div style="left:15px;top:238px;width:9px;height:9px;background:#fff;border:1px solid #000"></div>
<div style="left:17px;top:242px;width:5px;height:1px;background:#000"></div>
<div style="left:25px;top:242px;width:5px;height:1px;border-top:1px dotted #7a7a7a"></div>
<svg style="left:32px;top:234px" width="16" height="17" viewBox="0 0 16 17"><path d="M1.5 1.5L13.5 4.5V15.5L1.5 12.5Z" fill="#e8e8e8" stroke="#202020" stroke-width="1" stroke-dasharray="2 1"/><path d="M2 3.5L13 6.5V12L2 9Z" fill="#1a78c0"/><path d="M2 4L13 7V8.5L2 5.5Z" fill="#7cc4f0"/><path d="M2 10L13 13V15L2 12Z" fill="#c8c8c8"/><path d="M13.5 4.5V15.5" stroke="#303030" stroke-width="1.2"/><path d="M1.5 1.5V12.5" stroke="#303030" stroke-width="1"/></svg>
<span class="t12" style="left:47px;top:236px;font-size:12.3px;letter-spacing:0.35px;color:#000">Globale</span>
<div style="left:40px;top:260px;width:10px;height:1px;border-top:1px dotted #7a7a7a"></div>
<svg style="left:51px;top:252px" width="16" height="17" viewBox="0 0 16 17"><path d="M1.5 1.5L13.5 4.5V15.5L1.5 12.5Z" fill="#e8e8e8" stroke="#202020" stroke-width="1" stroke-dasharray="2 1"/><path d="M2 3.5L13 6.5V12L2 9Z" fill="#1a78c0"/><path d="M2 4L13 7V8.5L2 5.5Z" fill="#7cc4f0"/><path d="M2 10L13 13V15L2 12Z" fill="#c8c8c8"/><path d="M13.5 4.5V15.5" stroke="#303030" stroke-width="1.2"/><path d="M1.5 1.5V12.5" stroke="#303030" stroke-width="1"/></svg>
<span class="t12" style="left:67px;top:254px;font-size:12.3px;letter-spacing:0.35px;color:#000">Namespaces</span>
<div style="left:40px;top:278px;width:10px;height:1px;border-top:1px dotted #7a7a7a"></div>
<svg style="left:51px;top:270px" width="16" height="17" viewBox="0 0 16 17"><path d="M1.5 1.5L13.5 4.5V15.5L1.5 12.5Z" fill="#e8e8e8" stroke="#202020" stroke-width="1" stroke-dasharray="2 1"/><path d="M2 3.5L13 6.5V12L2 9Z" fill="#1a78c0"/><path d="M2 4L13 7V8.5L2 5.5Z" fill="#7cc4f0"/><path d="M2 10L13 13V15L2 12Z" fill="#c8c8c8"/><path d="M13.5 4.5V15.5" stroke="#303030" stroke-width="1.2"/><path d="M1.5 1.5V12.5" stroke="#303030" stroke-width="1"/></svg>
<span class="t12" style="left:67px;top:272px;font-size:12.3px;letter-spacing:0.35px;color:#000">Strukturen</span>
<div style="left:35px;top:292px;width:9px;height:9px;background:#fff;border:1px solid #000"></div>
<div style="left:37px;top:296px;width:5px;height:1px;background:#000"></div>
<div style="left:39px;top:294px;width:1px;height:5px;background:#000"></div>
<div style="left:45px;top:296px;width:5px;height:1px;border-top:1px dotted #7a7a7a"></div>
<svg style="left:51px;top:288px" width="16" height="17" viewBox="0 0 16 17"><path d="M1.5 1.5L13.5 4.5V15.5L1.5 12.5Z" fill="#e8e8e8" stroke="#202020" stroke-width="1" stroke-dasharray="2 1"/><path d="M2 3.5L13 6.5V12L2 9Z" fill="#1a78c0"/><path d="M2 4L13 7V8.5L2 5.5Z" fill="#7cc4f0"/><path d="M2 10L13 13V15L2 12Z" fill="#c8c8c8"/><path d="M13.5 4.5V15.5" stroke="#303030" stroke-width="1.2"/><path d="M1.5 1.5V12.5" stroke="#303030" stroke-width="1"/></svg>
<span class="t12" style="left:67px;top:290px;font-size:12.3px;letter-spacing:0.35px;color:#000">Funktionen</span>
<div style="left:35px;top:310px;width:9px;height:9px;background:#fff;border:1px solid #000"></div>
<div style="left:37px;top:314px;width:5px;height:1px;background:#000"></div>
<div style="left:39px;top:312px;width:1px;height:5px;background:#000"></div>
<div style="left:45px;top:314px;width:5px;height:1px;border-top:1px dotted #7a7a7a"></div>
<svg style="left:51px;top:306px" width="16" height="17" viewBox="0 0 16 17"><path d="M1.5 1.5L13.5 4.5V15.5L1.5 12.5Z" fill="#e8e8e8" stroke="#202020" stroke-width="1" stroke-dasharray="2 1"/><path d="M2 3.5L13 6.5V12L2 9Z" fill="#1a78c0"/><path d="M2 4L13 7V8.5L2 5.5Z" fill="#7cc4f0"/><path d="M2 10L13 13V15L2 12Z" fill="#c8c8c8"/><path d="M13.5 4.5V15.5" stroke="#303030" stroke-width="1.2"/><path d="M1.5 1.5V12.5" stroke="#303030" stroke-width="1"/></svg>
<span class="t12" style="left:67px;top:308px;font-size:12.3px;letter-spacing:0.35px;color:#000">Variablen</span>
<div style="left:9px;top:661px;width:245px;height:1px;background:#727272"></div>
<div class="trk" style="left:9px;top:662px;width:245px;height:14px;"></div>
<div class="sbh" style="left:9px;top:662px;width:102px;height:14px;"></div>
<div class="knob" style="left:55px;top:664px;width:10px;height:10px;"></div>
<div style="left:222px;top:662px;width:15px;height:14px;background:radial-gradient(circle at 50% 50%,#c8c8c8 0,#bdbdbd 35%,#dedede 55%,#e6e6e6 100%);border:1px solid;border-color:#fafafa #6a6a6a #6a6a6a #fafafa"></div>
<svg style="left:0;top:0" width="1024" height="768"><path d="M231.5 665.5V672.5L227.5 669.0Z" fill="#000"/></svg>
<div style="left:237px;top:662px;width:15px;height:14px;background:radial-gradient(circle at 50% 50%,#c8c8c8 0,#bdbdbd 35%,#dedede 55%,#e6e6e6 100%);border:1px solid;border-color:#fafafa #6a6a6a #6a6a6a #fafafa"></div>
<svg style="left:0;top:0" width="1024" height="768"><path d="M242.5 665.5V672.5L246.5 669.0Z" fill="#000"/></svg>
<div style="left:256px;top:113px;width:1px;height:568px;background:#f0f0f0"></div>
<div style="left:257px;top:113px;width:1px;height:568px;background:#7a7a7a"></div>
<div style="left:258px;top:113px;width:1px;height:568px;background:#f4f4f4"></div>
<div style="left:261px;top:113px;width:1px;height:568px;background:#7a7a7a"></div>
<div style="left:262px;top:113px;width:757px;height:397px;background:#fff"></div>
<div style="left:262px;top:113px;width:757px;height:1px;background:#6a6a6a"></div>
<div style="left:262px;top:113px;width:1px;height:397px;background:#9a9a9a"></div>
<div style="left:263px;top:114px;width:755px;height:1px;background:#000"></div>
<div style="left:263px;top:114px;width:1px;height:395px;background:#000"></div>
<div style="left:262px;top:509px;width:757px;height:1px;background:#f0f0f0"></div>
<div style="left:264px;top:115px;width:15px;height:378px;background:#d0d0d0"></div>
<div style="left:279px;top:115px;width:1px;height:378px;background:#8a8a8a"></div>
<div class="trk" style="left:1002px;top:115px;width:16px;height:378px;"></div>
<div class="sbv" style="left:1003px;top:175px;width:14px;height:51px;"></div>
<div class="knob" style="left:1004px;top:195px;width:10px;height:10px;"></div>
<div style="left:1002px;top:115px;width:1px;height:378px;background:#6a6a6a"></div>
<div style="left:1003px;top:463px;width:14px;height:15px;background:radial-gradient(circle at 50% 50%,#c8c8c8 0,#bdbdbd 35%,#dedede 55%,#e6e6e6 100%);border:1px solid;border-color:#fafafa #6a6a6a #6a6a6a #fafafa"></div>
<svg style="left:0;top:0" width="1024" height="768"><path d="M1006.5 472.5H1013.5L1010.0 468.5Z" fill="#000"/></svg>
<div style="left:1003px;top:478px;width:14px;height:14px;background:radial-gradient(circle at 50% 50%,#c8c8c8 0,#bdbdbd 35%,#dedede 55%,#e6e6e6 100%);border:1px solid;border-color:#fafafa #6a6a6a #6a6a6a #fafafa"></div>
<svg style="left:0;top:0" width="1024" height="768"><path d="M1006.5 483.0H1013.5L1010.0 487.0Z" fill="#000"/></svg>
<div class="trk" style="left:264px;top:493px;width:738px;height:16px;"></div>
<div style="left:264px;top:493px;width:738px;height:1px;background:#6a6a6a"></div>
<div class="sbh" style="left:264px;top:494px;width:625px;height:14px;"></div>
<div class="knob" style="left:571px;top:495px;width:10px;height:10px;"></div>
<div style="left:973px;top:494px;width:14px;height:14px;background:radial-gradient(circle at 50% 50%,#c8c8c8 0,#bdbdbd 35%,#dedede 55%,#e6e6e6 100%);border:1px solid;border-color:#fafafa #6a6a6a #6a6a6a #fafafa"></div>
<svg style="left:0;top:0" width="1024" height="768"><path d="M982.0 497.5V504.5L978.0 501.0Z" fill="#000"/></svg>
<div style="left:987px;top:494px;width:14px;height:14px;background:radial-gradient(circle at 50% 50%,#c8c8c8 0,#bdbdbd 35%,#dedede 55%,#e6e6e6 100%);border:1px solid;border-color:#fafafa #6a6a6a #6a6a6a #fafafa"></div>
<svg style="left:0;top:0" width="1024" height="768"><path d="M992.0 497.5V504.5L996.0 501.0Z" fill="#000"/></svg>
<div style="left:1002px;top:493px;width:16px;height:16px;background:#d4d4d4"></div>
<div style="left:280px;top:115px;width:722px;height:378px;overflow:hidden"><div class="code" style="left:2px;top:1px"><b class="kw">class</b> PPLinView;

<i class="cm">/**</i>
<i class="cm">  * The base class for PPLin application windows. It sets up the main</i>
<i class="cm">  * window and reads the config file as well as providing a menubar, toolbar</i>
<i class="cm">  * and statusbar. In initView(), your main view is created as the MDI child window manager.</i>
<i class="cm">  * Child windows are created in createClient(), which gets a document instance as it's document to</i>
<i class="cm">  * display whereby one document can have several views.The MDI child is an instance of PPLinView,</i>
<i class="cm">  * the document an instance of PPLinDoc.</i>
<i class="cm">  * PPLinApp reimplements the methods that KTMainWindow provides for main window handling and supports</i>
<i class="cm">  * full session management as well as keyboard accelerator configuration by using KAccel.</i>
<i class="cm">  * @see KMainWindow</i>
<i class="cm">  * @see KApplication</i>
<i class="cm">  * @see KConfig</i>
<i class="cm">  * @see KAccel</i>
<i class="cm">  *</i>
<i class="cm">  * @author Source Framework Automatically Generated by KDevelop, (c) The KDevelop Team.</i>
<i class="cm">  * @version KDevelop version 1.3 code generation</i>
<i class="cm">  */</i>
<b class="kw">class</b> PPLinApp : <b class="kw">public</b> KMainWindow
{
  <b class="kw">Q_OBJECT</b>

  <b class="kw">public</b>:
    <i class="cm">/** construtor of PPLinApp, calls all init functions to create the application.</i>
     <i class="cm">* @see initMenuBar initToolBar</i>
     <i class="cm">*/</i>
    PPLinApp();
    ~PPLinApp();
    <i class="cm">/** opens a file specified by commandline option</i>
     <i class="cm">*/</i>
    <span style="position:static;color:#7a0000">void</span> openDocumentFile(<b class="kw">const</b> KURL&amp; url=<span style="position:static;color:#0000c8">0</span>);

  <b class="kw">protected</b>:
    <i class="cm">/** queryClose is called by KTMainWindow on each closeEvent of a window. Against the</i></div></div>
<div style="left:262px;top:510px;width:757px;height:4px;background:#e6e6e6"></div>
<div style="left:262px;top:514px;width:757px;height:1px;background:#787878"></div>
<div style="left:262px;top:515px;width:757px;height:1px;background:#f4f4f4"></div>
<div class="grv" style="left:263px;top:516px;width:739px;height:3px;"></div>
<div class="grv" style="left:263px;top:519px;width:739px;height:3px;"></div>
<div style="left:263px;top:522px;width:739px;height:1px;background:#a8a8a8"></div>
<div style="left:1004px;top:517px;width:6px;height:6px;border:2px solid #000;background:#fff"></div>
<svg style="left:1012px;top:516px" width="8" height="8" viewBox="0 0 8 8"><path d="M1 1L6.5 6.5M6.5 1L1 6.5" stroke="#000" stroke-width="1.2"/></svg>
<div style="left:262px;top:514px;width:1px;height:166px;background:#f4f4f4"></div>
<div style="left:346px;top:525px;width:1px;height:23px;background:#7a7a7a"></div>
<span class="t12" style="left:273px;top:531px;font-size:12.3px;letter-spacing:0.3px">Meldungen</span>
<div style="left:347px;top:526px;width:53px;height:1px;background:#f6f6f6"></div>
<div style="left:347px;top:526px;width:1px;height:22px;background:#f6f6f6"></div>
<div style="left:400px;top:526px;width:1px;height:22px;background:#7a7a7a"></div>
<span class="t12" style="left:355px;top:532px;font-size:12.3px;letter-spacing:0.3px">StdOut</span>
<div style="left:401px;top:526px;width:51px;height:1px;background:#f6f6f6"></div>
<div style="left:401px;top:526px;width:1px;height:22px;background:#f6f6f6"></div>
<div style="left:452px;top:526px;width:1px;height:22px;background:#7a7a7a"></div>
<span class="t12" style="left:411px;top:532px;font-size:12.3px;letter-spacing:0.3px">StdErr</span>
<div style="left:453px;top:526px;width:62px;height:1px;background:#f6f6f6"></div>
<div style="left:453px;top:526px;width:1px;height:22px;background:#f6f6f6"></div>
<div style="left:515px;top:526px;width:1px;height:22px;background:#7a7a7a"></div>
<span class="t12" style="left:463px;top:532px;font-size:12.3px;letter-spacing:0.3px">Konsole</span>
<div style="left:516px;top:526px;width:76px;height:1px;background:#f6f6f6"></div>
<div style="left:516px;top:526px;width:1px;height:22px;background:#f6f6f6"></div>
<div style="left:592px;top:526px;width:1px;height:22px;background:#7a7a7a"></div>
<span class="t12" style="left:526px;top:532px;font-size:12.3px;letter-spacing:0.3px">Haltepunkt</span>
<div style="left:346px;top:548px;width:673px;height:1px;background:#f6f6f6"></div>
<div style="left:264px;top:524px;width:1px;height:25px;background:#f6f6f6"></div>
<div class="grv" style="left:266px;top:554px;width:731px;height:3px;"></div>
<div class="grv" style="left:266px;top:558px;width:731px;height:3px;"></div>
<div style="left:1001px;top:554px;width:6px;height:6px;border:2px solid #000;background:#fff"></div>
<svg style="left:1009px;top:553px" width="8" height="8" viewBox="0 0 8 8"><path d="M1 1L6.5 6.5M6.5 1L1 6.5" stroke="#000" stroke-width="1.2"/></svg>
<div style="left:265px;top:561px;width:753px;height:117px;background:#fff;border:1px solid;border-color:#8a8a8a #f4f4f4 #f4f4f4 #8a8a8a"></div>
<div style="left:266px;top:562px;width:751px;height:1px;background:#000"></div>
<div style="left:266px;top:562px;width:1px;height:114px;background:#000"></div>
<div style="left:267px;top:563px;width:732px;height:99px;overflow:hidden"><div class="out" style="left:1px;top:-7px">c++ –DHAVE_CONFIG_H –I. –I. –I.. –I/opt/kde/include –I/usr/lib/qt/include –I/usr/X11R6/include      –O2 –O0 –g3 –Wall –fno–exceptions
/usr/lib/qt/bin/moc ./pplindoc.h –o pplindoc.moc.cpp
c++ –DHAVE_CONFIG_H –I. –I. –I.. –I/opt/kde/include –I/usr/lib/qt/include –I/usr/X11R6/include      –O2 –O0 –g3 –Wall –fno–exceptions
/usr/lib/qt/bin/moc ./pplin.h –o pplin.moc.cpp
c++ –DHAVE_CONFIG_H –I. –I. –I.. –I/opt/kde/include –I/usr/lib/qt/include –I/usr/X11R6/include      –O2 –O0 –g3 –Wall –fno–exceptions
/usr/lib/qt/bin/moc ./pplinview.h –o pplinview.moc.cpp
c++ –DHAVE_CONFIG_H –I. –I. –I.. –I/opt/kde/include –I/usr/lib/qt/include –I/usr/X11R6/include      –O2 –O0 –g3 –Wall –fno–exceptions</div></div>
<div class="trk" style="left:1001px;top:562px;width:16px;height:100px;"></div>
<div class="sbv" style="left:1002px;top:573px;width:14px;height:13px;"></div>
<div style="left:1001px;top:562px;width:1px;height:100px;background:#6a6a6a"></div>
<div style="left:1002px;top:633px;width:14px;height:15px;background:radial-gradient(circle at 50% 50%,#c8c8c8 0,#bdbdbd 35%,#dedede 55%,#e6e6e6 100%);border:1px solid;border-color:#fafafa #6a6a6a #6a6a6a #fafafa"></div>
<svg style="left:0;top:0" width="1024" height="768"><path d="M1005.5 642.5H1012.5L1009.0 638.5Z" fill="#000"/></svg>
<div style="left:1002px;top:648px;width:14px;height:14px;background:radial-gradient(circle at 50% 50%,#c8c8c8 0,#bdbdbd 35%,#dedede 55%,#e6e6e6 100%);border:1px solid;border-color:#fafafa #6a6a6a #6a6a6a #fafafa"></div>
<svg style="left:0;top:0" width="1024" height="768"><path d="M1005.5 653.0H1012.5L1009.0 657.0Z" fill="#000"/></svg>
<div class="trk" style="left:267px;top:662px;width:735px;height:14px;"></div>
<div class="sbh" style="left:267px;top:663px;width:139px;height:14px;"></div>
<div class="knob" style="left:331px;top:665px;width:10px;height:10px;"></div>
<div style="left:267px;top:662px;width:735px;height:1px;background:#6a6a6a"></div>
<div style="left:972px;top:663px;width:14px;height:14px;background:radial-gradient(circle at 50% 50%,#c8c8c8 0,#bdbdbd 35%,#dedede 55%,#e6e6e6 100%);border:1px solid;border-color:#fafafa #6a6a6a #6a6a6a #fafafa"></div>
<svg style="left:0;top:0" width="1024" height="768"><path d="M981.0 666.5V673.5L977.0 670.0Z" fill="#000"/></svg>
<div style="left:986px;top:663px;width:14px;height:14px;background:radial-gradient(circle at 50% 50%,#c8c8c8 0,#bdbdbd 35%,#dedede 55%,#e6e6e6 100%);border:1px solid;border-color:#fafafa #6a6a6a #6a6a6a #fafafa"></div>
<svg style="left:0;top:0" width="1024" height="768"><path d="M991.0 666.5V673.5L995.0 670.0Z" fill="#000"/></svg>
<div style="left:1002px;top:662px;width:15px;height:14px;background:#d4d4d4"></div>
<div style="left:4px;top:678px;width:1015px;height:3px;background:#e4e4e4"></div>
<div style="left:4px;top:680px;width:1015px;height:1px;background:#a0a0a0"></div>
<div style="left:4px;top:681px;width:1015px;height:1px;background:#fafafa"></div>
<div class="hdl" style="left:6px;top:685px;width:6px;height:9px;"></div>
<div class="vgrv" style="left:12px;top:682px;width:2px;height:28px;"></div>
<div style="left:15px;top:684px;width:69px;height:27px;background:#e2d6cc;border:1px solid #000;border-right-width:2px;border-bottom-width:2px;box-shadow:inset 1px 1px 0 #fff"></div>
<span class="t12" style="left:33px;top:692px;font-size:12px;letter-spacing:0.25px">pplin.h</span>
<div style="left:4px;top:710px;width:1015px;height:1px;background:#747474"></div>
<div style="left:4px;top:711px;width:1015px;height:1px;background:#fafafa"></div>
<div class="sunk" style="left:6px;top:720px;width:562px;height:17px;"></div>
<div class="sunk" style="left:570px;top:720px;width:22px;height:17px;"></div>
<div class="sunk" style="left:593px;top:720px;width:105px;height:17px;background:#fff"></div>
<div class="sunk" style="left:699px;top:720px;width:59px;height:17px;"></div>
<div class="sunk" style="left:759px;top:720px;width:35px;height:17px;"></div>
<div class="sunk" style="left:795px;top:720px;width:131px;height:17px;"></div>
<div class="sunk" style="left:927px;top:720px;width:89px;height:17px;"></div>
<span class="t12" style="left:7px;top:722px;">Bereit.</span>
<span class="t12" style="left:762px;top:722px;">Einfg</span>
<span class="t12" style="left:809px;top:722px;">Zeile: 56 Spalte: 1</span>
<div style="left:0px;top:744px;width:1024px;height:24px;background:linear-gradient(#dedede,#cacaca)"></div>
<div style="left:0px;top:744px;width:1024px;height:1px;background:#f8f8f8"></div>
<div style="left:0px;top:766px;width:1024px;height:2px;background:#282828"></div>
<div style="left:2px;top:746px;width:30px;height:20px;background:#9ab8de"></div>
<div style="left:32px;top:746px;width:20px;height:20px;background:#98c8a0"></div>
<div style="left:52px;top:746px;width:20px;height:20px;background:#eeb07c"></div>
<div style="left:72px;top:746px;width:20px;height:20px;background:linear-gradient(90deg,#d2d2d2,#c4c4c4 60%,#b4b4b4)"></div>
<div style="left:92px;top:746px;width:20px;height:20px;background:linear-gradient(90deg,#d2d2d2,#c4c4c4 60%,#b4b4b4)"></div>
<div style="left:112px;top:746px;width:20px;height:20px;background:linear-gradient(90deg,#d2d2d2,#c4c4c4 60%,#b4b4b4)"></div>
<div style="left:132px;top:746px;width:20px;height:20px;background:linear-gradient(90deg,#d2d2d2,#c4c4c4 60%,#b4b4b4)"></div>
<div style="left:152px;top:746px;width:20px;height:20px;background:linear-gradient(90deg,#d2d2d2,#c4c4c4 60%,#b4b4b4)"></div>
<div style="left:172px;top:746px;width:20px;height:20px;background:linear-gradient(90deg,#d2d2d2,#c4c4c4 60%,#b4b4b4)"></div>
<div style="left:192px;top:746px;width:20px;height:20px;background:linear-gradient(90deg,#d2d2d2,#c4c4c4 60%,#b4b4b4)"></div>
<svg style="left:2px;top:746px" width="30" height="21" viewBox="0 0 30 21"><path d="M16 2L18.5 5L22 3.5L22.5 7.5L26 8.5L23.5 11.5L26 14.5L22.5 15.5L22 19L18.5 17.5L16 20.5L13.5 17.5L10 19L9.5 15.5L6 14.5L8.5 11.5L6 8.5L9.5 7.5L10 3.5L13.5 5Z" fill="#f4f4f4" stroke="#303030" stroke-width="0.8"/><circle cx="16" cy="11.5" r="4" fill="#d89030"/><path d="M13 5.5V17.5M13 11.5L19 5.5M14.5 10.5L19.5 17.5" stroke="#000" stroke-width="3.4"/><path d="M13 6V17M13 11.5L18.5 6M14.5 10.5L19 17" stroke="#fff" stroke-width="1.6"/><rect x="-2" y="0" width="10" height="9" rx="3" fill="#b4b4b4"/><path d="M1 6H7L4 2.5Z" fill="#000"/></svg>
<svg style="left:31px;top:746px" width="22" height="21" viewBox="0 0 22 21"><path d="M9 6L15 4L18 9" fill="#3a9ab8" stroke="#333" stroke-width="0.6"/><rect x="2.5" y="9.5" width="13" height="9" fill="#fff" stroke="#333"/><path d="M3 10H15V12H3Z" fill="#3a7ab8"/><rect x="-1" y="0" width="10" height="9" rx="3" fill="#b4b4b4"/><path d="M1 6H7L4 2.5Z" fill="#000"/></svg>
<svg style="left:53px;top:746px" width="20" height="21" viewBox="0 0 20 21"><path d="M2 12L10 6L18 11L10 18Z" fill="#f8f8f8" stroke="#333"/><path d="M5 12L10 9L15 12L10 15Z" fill="#d0a070"/><path d="M10 2V9" stroke="#333" stroke-width="1.6"/></svg>
<svg style="left:73px;top:746px" width="20" height="21" viewBox="0 0 20 21"><path d="M2 10L10 3L18 10" fill="none" stroke="#000" stroke-width="1.6"/><path d="M4 9V18H16V9L10 4Z" fill="#f4f4f4" stroke="#000"/><rect x="8" y="11" width="4" height="7" fill="#d07020" stroke="#000" stroke-width="0.6"/></svg>
<svg style="left:93px;top:746px" width="20" height="21" viewBox="0 0 20 21"><rect x="2" y="4" width="16" height="13" fill="#c8c8c8" stroke="#000"/><rect x="4" y="6" width="12" height="9" fill="#202020"/><rect x="5" y="7" width="5" height="3" fill="#606060"/></svg>
<svg style="left:113px;top:746px" width="20" height="21" viewBox="0 0 20 21"><rect x="2" y="3" width="9" height="15" fill="#30a030" stroke="#000"/><rect x="9" y="5" width="9" height="12" fill="#e8e8e8" stroke="#000"/><rect x="11" y="7" width="5" height="4" fill="#40c040"/><rect x="4" y="6" width="4" height="2" fill="#fff"/></svg>
<svg style="left:133px;top:746px" width="20" height="21" viewBox="0 0 20 21"><circle cx="10" cy="10.5" r="7" fill="none" stroke="#c02020" stroke-width="3.5"/><circle cx="10" cy="10.5" r="7" fill="none" stroke="#fff" stroke-width="3.5" stroke-dasharray="3.5 7.5"/><circle cx="10" cy="10.5" r="8.8" fill="none" stroke="#555" stroke-width="0.6"/></svg>
<svg style="left:153px;top:746px" width="20" height="21" viewBox="0 0 20 21"><path d="M3 17L15 3L18 6L6 19Z" fill="#e8d8a0" stroke="#333" stroke-width="0.8"/><path d="M5 16L16 5" stroke="#8a7a40"/><path d="M15 3L18 1L20 4L18 6Z" fill="#333"/></svg>
<svg style="left:173px;top:746px" width="20" height="21" viewBox="0 0 20 21"><path d="M3 12L9 3L13 6L8 17Z" fill="#fff" stroke="#000"/><path d="M9 8L15 5L18 10L12 18L8 16Z" fill="#f08020" stroke="#000" stroke-width="0.8"/><path d="M10 10L16 8M10 13L16 11" stroke="#fff"/></svg>
<svg style="left:193px;top:746px" width="20" height="21" viewBox="0 0 20 21"><rect x="4" y="2" width="13" height="17" fill="#2a6a6a" stroke="#000"/><rect x="6" y="4" width="9" height="3" fill="#40e0e0"/><path d="M6 9H15M6 12H15M6 15H15" stroke="#c0f0f0"/></svg>
<div style="left:213px;top:746px;width:10px;height:21px;background-image:radial-gradient(circle,#888 0.8px,transparent 1px);background-size:4px 4px;background-position:1px 1px"></div>
<div style="left:228px;top:746px;width:104px;height:21px;background:#707070;border:1px solid #505050"></div>
<div style="left:229px;top:747px;width:25px;height:19px;border-right:1px solid #a0a0a0"></div>
<div style="left:255px;top:747px;width:25px;height:19px;border-right:1px solid #a0a0a0"></div>
<div style="left:281px;top:747px;width:25px;height:19px;border-right:1px solid #a0a0a0"></div>
<div style="left:238px;top:748px;width:14px;height:17px;background:#ececec;border:1px solid #909090;box-shadow:inset -2px 0 0 #c8c8c8"></div>
<div style="left:254px;top:748px;width:24px;height:17px;background:#ececec;border:1px solid #909090;box-shadow:inset -3px 0 0 #c8c8c8"></div>
<div style="left:282px;top:748px;width:20px;height:9px;background:#ececec;border:1px solid #909090"></div>
<div style="left:281px;top:756px;width:24px;height:9px;background:#ececec;border:1px solid #909090"></div>
<div style="left:307px;top:747px;width:25px;height:19px;background:#5a2400;border:1px solid #f0f0f0"></div>
<div style="left:333px;top:746px;width:6px;height:21px;background-image:radial-gradient(circle,#888 0.8px,transparent 1px);background-size:4px 4px"></div>
<svg style="left:339px;top:748px" width="13" height="13" viewBox="0 0 13 13"><circle cx="6.5" cy="6.5" r="6" fill="#c8c8c8" stroke="#999"/><path d="M3 8L6.5 4L10 8Z" fill="#000"/></svg>
<div style="left:352px;top:746px;width:51px;height:20px;background:linear-gradient(#f2f2f2,#dadada);border:1px solid;border-color:#fafafa #000 #000 #fafafa"></div>
<svg style="left:354px;top:747px" width="18" height="18" viewBox="0 0 20 20"><rect x="2" y="3" width="15" height="13" fill="#d0d0d0" stroke="#000"/><rect x="4" y="5" width="11" height="9" fill="#202020"/></svg>
<div style="left:372px;top:746px;width:29px;height:20px;overflow:hidden"><span style="left:0;top:4px;font-size:11.2px;white-space:pre;color:#444">Konsole</span><div style="left:15px;top:0;width:14px;height:20px;background:linear-gradient(90deg,rgba(232,232,232,0),#e4e4e4)"></div></div>
<div style="left:404px;top:746px;width:51px;height:20px;background:linear-gradient(#f2f2f2,#dadada);border:1px solid;border-color:#fafafa #000 #000 #fafafa"></div>
<svg style="left:406px;top:747px" width="18" height="18" viewBox="0 0 20 20"><rect x="1" y="1" width="2" height="17" fill="#888"/><circle cx="11" cy="11" r="6" fill="#fff" stroke="#000" stroke-width="1.2"/><path d="M11 8V11H13" stroke="#c00000"/><path d="M6 3L9 6M16 3L13 6" stroke="#000"/></svg>
<div style="left:424px;top:746px;width:29px;height:20px;overflow:hidden"><span style="left:0;top:4px;font-size:11.2px;white-space:pre;color:#000">KArm</span><div style="left:15px;top:0;width:14px;height:20px;background:linear-gradient(90deg,rgba(232,232,232,0),#e4e4e4)"></div></div>
<div style="left:455px;top:746px;width:51px;height:20px;background:linear-gradient(#f2f2f2,#dadada);border:1px solid;border-color:#fafafa #000 #000 #fafafa"></div>
<svg style="left:457px;top:747px" width="18" height="18" viewBox="0 0 20 20"><path d="M10 1L12.5 7H19L14 11L16 18L10 14L4 18L6 11L1 7H7.5Z" fill="#c82020" stroke="#600000" stroke-width="0.6"/><path d="M2 6L18 12" stroke="#806000" stroke-width="0.6"/></svg>
<div style="left:475px;top:746px;width:29px;height:20px;overflow:hidden"><span style="left:0;top:4px;font-size:11.2px;white-space:pre;color:#444">Was ist</span><div style="left:15px;top:0;width:14px;height:20px;background:linear-gradient(90deg,rgba(232,232,232,0),#e4e4e4)"></div></div>
<div style="left:506px;top:746px;width:51px;height:20px;background:linear-gradient(#f2f2f2,#dadada);border:1px solid;border-color:#fafafa #000 #000 #fafafa"></div>
<svg style="left:508px;top:747px" width="18" height="18" viewBox="0 0 20 20"><path d="M3 12L9 3L13 6L8 17Z" fill="#fff" stroke="#000"/><path d="M9 8L15 5L18 10L12 18L8 16Z" fill="#f08020" stroke="#000" stroke-width="0.8"/></svg>
<div style="left:526px;top:746px;width:29px;height:20px;overflow:hidden"><span style="left:0;top:4px;font-size:11.2px;white-space:pre;color:#444">Das E</span><div style="left:15px;top:0;width:14px;height:20px;background:linear-gradient(90deg,rgba(232,232,232,0),#e4e4e4)"></div></div>
<div style="left:557px;top:746px;width:51px;height:20px;background:linear-gradient(#f2f2f2,#dadada);border:1px solid;border-color:#fafafa #000 #000 #fafafa"></div>
<svg style="left:559px;top:747px" width="18" height="18" viewBox="0 0 20 20"><rect x="5" y="2" width="10" height="10" fill="none" stroke="#30c030" stroke-width="1.2"/><rect x="8" y="5" width="10" height="10" fill="none" stroke="#d030d0" stroke-width="1.2"/><rect x="2" y="8" width="10" height="10" fill="none" stroke="#8080f0" stroke-width="1.2"/></svg>
<div style="left:577px;top:746px;width:29px;height:20px;overflow:hidden"><span style="left:0;top:4px;font-size:11.2px;white-space:pre;color:#444">(VMw</span><div style="left:15px;top:0;width:14px;height:20px;background:linear-gradient(90deg,rgba(232,232,232,0),#e4e4e4)"></div></div>
<div style="left:608px;top:746px;width:51px;height:20px;background:linear-gradient(#f2f2f2,#dadada);border:1px solid;border-color:#fafafa #000 #000 #fafafa"></div>
<svg style="left:610px;top:747px" width="18" height="18" viewBox="0 0 20 20"><path d="M2 2L17 18M16 2L3 18" stroke="#000" stroke-width="2.4"/></svg>
<div style="left:628px;top:746px;width:29px;height:20px;overflow:hidden"><span style="left:0;top:4px;font-size:11.2px;white-space:pre;color:#000">Adm</span><div style="left:15px;top:0;width:14px;height:20px;background:linear-gradient(90deg,rgba(232,232,232,0),#e4e4e4)"></div></div>
<div style="left:659px;top:746px;width:51px;height:20px;background:linear-gradient(#f2f2f2,#dadada);border:1px solid;border-color:#fafafa #000 #000 #fafafa"></div>
<svg style="left:661px;top:747px" width="18" height="18" viewBox="0 0 20 20"><circle cx="10" cy="10" r="8" fill="#50a040" stroke="#206010"/><circle cx="10" cy="10" r="5" fill="#f0f0f0"/><path d="M12 7L7 10L10 13Z" fill="#777"/></svg>
<div style="left:679px;top:746px;width:29px;height:20px;overflow:hidden"><span style="left:0;top:4px;font-size:11.2px;white-space:pre;color:#444">file:/ho</span><div style="left:15px;top:0;width:14px;height:20px;background:linear-gradient(90deg,rgba(232,232,232,0),#e4e4e4)"></div></div>
<div style="left:710px;top:746px;width:52px;height:20px;background:#a8a8a8;border:1px solid;border-color:#000 #fafafa #fafafa #000"></div>
<svg style="left:712px;top:747px" width="18" height="18" viewBox="0 0 20 20"><circle cx="10" cy="10" r="8" fill="#50a040" stroke="#206010"/><circle cx="10" cy="10" r="5" fill="#f0f0f0"/><path d="M12 7L7 10L10 13Z" fill="#777"/></svg>
<div style="left:730px;top:746px;width:30px;height:20px;overflow:hidden"><span style="left:0;top:4px;font-size:11.2px;white-space:pre;color:#000">pplin.h</span><div style="left:16px;top:0;width:14px;height:20px;background:linear-gradient(90deg,rgba(232,232,232,0),#a8a8a8)"></div></div>
<svg style="left:650px;top:748px" width="14" height="14" viewBox="0 0 14 14"><circle cx="7" cy="7" r="6" fill="#c8c8c8" stroke="#999"/><path d="M3.5 8.5L7 4.5L10.5 8.5Z" fill="#000"/></svg>
<div style="left:763px;top:746px;width:8px;height:21px;background-image:radial-gradient(circle,#888 0.8px,transparent 1px);background-size:4px 4px"></div>
<svg style="left:773px;top:748px" width="18" height="19" viewBox="0 0 18 19"><path d="M5 9V6Q5 2 9 2Q13 2 13 6V9" fill="none" stroke="#555" stroke-width="2"/><rect x="3" y="9" width="12" height="9" fill="#e0c060" stroke="#604000"/></svg>
<svg style="left:793px;top:748px" width="18" height="19" viewBox="0 0 18 19"><path d="M6 6Q3 8 3 11Q3 16 9 16Q15 16 15 11Q15 8 12 6" fill="none" stroke="#000" stroke-width="2"/><path d="M9 3V10" stroke="#000" stroke-width="2"/></svg>
<div style="left:813px;top:746px;width:1px;height:21px;background:#888"></div>
<div style="left:814px;top:746px;width:1px;height:21px;background:#fff"></div>
<svg style="left:818px;top:746px" width="20" height="21" viewBox="0 0 20 21"><rect x="2" y="2" width="14" height="18" fill="#f08020" stroke="#000"/><rect x="4" y="5" width="10" height="13" fill="#fff" stroke="#000" stroke-width="0.6"/><path d="M7 2H11V4H7Z" fill="#888"/><path d="M7 8V16M7 12L11 8M8 12L11 16" stroke="#000"/></svg>
<svg style="left:840px;top:747px" width="20" height="20" viewBox="0 0 20 20"><rect x="2" y="2" width="16" height="16" fill="#fff" stroke="#000"/><rect x="2" y="2" width="16" height="3" fill="#4040c0"/><path d="M2 8H18M2 11H18M2 14H18M6 5V18M10 5V18M14 5V18" stroke="#555" stroke-width="0.6"/><path d="M11 10L15 18H7Z" fill="#f0c020" stroke="#804000" stroke-width="0.6"/></svg>
<svg style="left:862px;top:747px" width="26" height="20" viewBox="0 0 26 20"><path d="M2 7H6L12 2V18L6 13H2Z" fill="#40c8d0" stroke="#004050"/><path d="M14 4Q18 10 14 16M17 3Q21 10 17 17" fill="none" stroke="#888"/></svg>
<svg style="left:888px;top:747px" width="22" height="20" viewBox="0 0 22 20"><circle cx="11" cy="11" r="6" fill="#fff" stroke="#000" stroke-width="1.2"/><path d="M11 8V11H13" stroke="#c00000"/><path d="M6 3L9 6M16 3L13 6" stroke="#000"/><rect x="1" y="3" width="19" height="15" fill="none" stroke="#777" stroke-width="0.6"/></svg>
<div style="left:910px;top:746px;width:8px;height:21px;background-image:radial-gradient(circle,#888 0.8px,transparent 1px);background-size:4px 4px"></div>
<div style="left:922px;top:746px;width:47px;height:20px;background:#d4d4d4;border:1px solid;border-color:#404040 #fafafa #fafafa #404040"></div>
<svg style="left:922px;top:748px" width="46" height="16" viewBox="0 0 46 16"><rect x="4" y="0" width="6" height="2" fill="none"/><rect x="9" y="1" width="2" height="6" fill="#101010"/><rect x="9" y="8" width="2" height="6" fill="#101010"/><rect x="4" y="13" width="6" height="2" fill="none"/><rect x="3" y="8" width="2" height="6" fill="none"/><rect x="3" y="1" width="2" height="6" fill="none"/><rect x="4" y="7" width="6" height="2" fill="none"/><rect x="11" y="0" width="6" height="2" fill="#101010"/><rect x="16" y="1" width="2" height="6" fill="#101010"/><rect x="16" y="8" width="2" height="6" fill="#101010"/><rect x="11" y="13" width="6" height="2" fill="#101010"/><rect x="10" y="8" width="2" height="6" fill="#b8b8b8"/><rect x="10" y="1" width="2" height="6" fill="#b8b8b8"/><rect x="11" y="7" width="6" height="2" fill="#101010"/><rect x="23" y="4" width="2" height="2" fill="#101010"/><rect x="23" y="10" width="2" height="2" fill="#101010"/><rect x="28" y="0" width="6" height="2" fill="#b8b8b8"/><rect x="33" y="1" width="2" height="6" fill="#101010"/><rect x="33" y="8" width="2" height="6" fill="#101010"/><rect x="28" y="13" width="6" height="2" fill="#b8b8b8"/><rect x="27" y="8" width="2" height="6" fill="#b8b8b8"/><rect x="27" y="1" width="2" height="6" fill="#101010"/><rect x="28" y="7" width="6" height="2" fill="#101010"/><rect x="37" y="0" width="6" height="2" fill="#101010"/><rect x="42" y="1" width="2" height="6" fill="#101010"/><rect x="42" y="8" width="2" height="6" fill="#101010"/><rect x="37" y="13" width="6" height="2" fill="#101010"/><rect x="36" y="8" width="2" height="6" fill="#101010"/><rect x="36" y="1" width="2" height="6" fill="#101010"/><rect x="37" y="7" width="6" height="2" fill="#101010"/></svg>
<span class="t12" style="left:970px;top:750px;font-size:11.3px;letter-spacing:-0.1px">31.8. 01</span>
<div style="left:1011px;top:746px;width:13px;height:21px;background:linear-gradient(#f4f4f4,#c8c8c8);border-left:1px solid #888"></div>
<svg style="left:1014px;top:751px" width="8" height="12" viewBox="0 0 8 12"><path d="M2 1L7 6L2 11Z" fill="#000"/></svg></body></html>
